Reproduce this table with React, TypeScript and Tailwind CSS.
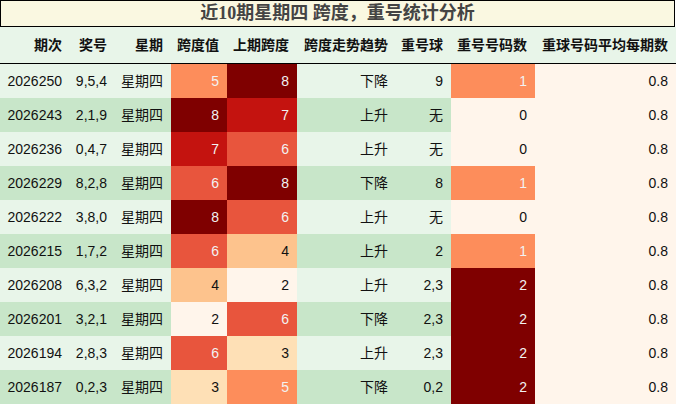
import React from "react";

type Row = {
  q: string;
  n: string;
  w: string;
  s: number;
  p: number;
  t: string;
  c: string;
  k: number;
  a: string;
};

const rows: Row[] = [
  { q: "2026250", n: "9,5,4", w: "星期四", s: 5, p: 8, t: "下降", c: "9", k: 1, a: "0.8" },
  { q: "2026243", n: "2,1,9", w: "星期四", s: 8, p: 7, t: "上升", c: "无", k: 0, a: "0.8" },
  { q: "2026236", n: "0,4,7", w: "星期四", s: 7, p: 6, t: "上升", c: "无", k: 0, a: "0.8" },
  { q: "2026229", n: "8,2,8", w: "星期四", s: 6, p: 8, t: "下降", c: "8", k: 1, a: "0.8" },
  { q: "2026222", n: "3,8,0", w: "星期四", s: 8, p: 6, t: "上升", c: "无", k: 0, a: "0.8" },
  { q: "2026215", n: "1,7,2", w: "星期四", s: 6, p: 4, t: "上升", c: "2", k: 1, a: "0.8" },
  { q: "2026208", n: "6,3,2", w: "星期四", s: 4, p: 2, t: "上升", c: "2,3", k: 2, a: "0.8" },
  { q: "2026201", n: "3,2,1", w: "星期四", s: 2, p: 6, t: "下降", c: "2,3", k: 2, a: "0.8" },
  { q: "2026194", n: "2,8,3", w: "星期四", s: 6, p: 3, t: "上升", c: "2,3", k: 2, a: "0.8" },
  { q: "2026187", n: "0,2,3", w: "星期四", s: 3, p: 5, t: "下降", c: "0,2", k: 2, a: "0.8" },
];

const spanColor: Record<number, string> = {
  2: "#fff5eb",
  3: "#fee0b6",
  4: "#fdc38d",
  5: "#fd8d5b",
  6: "#e8553d",
  7: "#c4130f",
  8: "#7f0000",
};
const spanDark: Record<number, boolean> = { 2: false, 3: false, 4: false, 5: true, 6: true, 7: true, 8: true };

const countColor: Record<number, string> = { 0: "#fff5eb", 1: "#fd8d5b", 2: "#7f0000" };

const grid = "grid grid-cols-[70px_45px_56px_56px_70px_99px_55px_84px_141px]";

function Cell({ children, bg, dark }: { children: React.ReactNode; bg?: string; dark?: boolean }) {
  return (
    <div
      className={`flex items-center justify-end pr-2 ${dark ? "text-[#f2f2f2]" : "text-[#111]"}`}
      style={bg ? { backgroundColor: bg } : undefined}
    >
      {children}
    </div>
  );
}

export default function App() {
  const headers = ["期次", "奖号", "星期", "跨度值", "上期跨度", "跨度走势趋势", "重号球", "重号号码数", "重球号码平均每期数"];
  return (
    <div
      className="w-[676px] h-[405px] bg-white overflow-hidden text-[14px]"
      style={{ fontFamily: '"Liberation Sans", "Noto Sans CJK SC", sans-serif' }}
    >
      <div
        className="w-[675px] h-[27px] border border-black bg-[#faf8e1] flex items-center justify-center text-[18px] font-bold text-[#444]"
        style={{ fontFamily: '"Liberation Serif", "Noto Sans CJK SC", serif' }}
      >
        近10期星期四 跨度，重号统计分析
      </div>
      <div className={`${grid} h-[37px] bg-[#e8f5e9] border-b border-black font-bold text-[#111]`}>
        {headers.map((h) => (
          <div key={h} className="flex items-center justify-end pr-2 whitespace-nowrap">
            {h}
          </div>
        ))}
      </div>
      {rows.map((r, i) => (
        <div key={r.q} className={`${grid} h-[34px] ${i % 2 === 0 ? "bg-[#e8f5e9]" : "bg-[#c8e6c9]"}`}>
          <Cell>{r.q}</Cell>
          <Cell>{r.n}</Cell>
          <Cell>{r.w}</Cell>
          <Cell bg={spanColor[r.s]} dark={spanDark[r.s]}>
            {r.s}
          </Cell>
          <Cell bg={spanColor[r.p]} dark={spanDark[r.p]}>
            {r.p}
          </Cell>
          <Cell>{r.t}</Cell>
          <Cell>{r.c}</Cell>
          <Cell bg={countColor[r.k]} dark={r.k > 0}>
            {r.k}
          </Cell>
          <Cell bg="#fff5eb">{r.a}</Cell>
        </div>
      ))}
    </div>
  );
}
